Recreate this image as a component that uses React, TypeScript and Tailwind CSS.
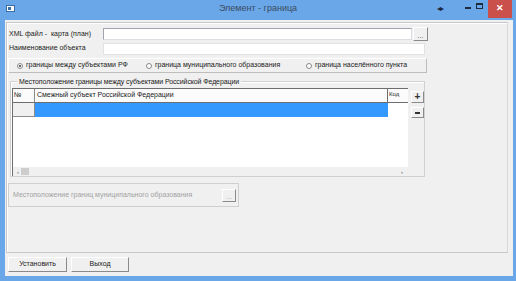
import React from "react";

const font = { fontFamily: '"Liberation Sans", Arial, sans-serif' };

function DotsButton({ className }: { className: string }) {
  return (
    <div
      className={`flex items-end justify-center bg-[#f0f0f0] border border-t-white border-l-white border-b-[#8a8a8a] border-r-[#8a8a8a] text-[7px] leading-[8px] text-[#555] ${className}`}
    >
      ...
    </div>
  );
}

function Radio({ label, checked }: { label: string; checked?: boolean }) {
  return (
    <div className="flex items-center gap-[3px]">
      <div className="w-[6px] h-[6px] rounded-full border border-[#8a8a8a] bg-white flex items-center justify-center">
        {checked && <div className="w-[2px] h-[2px] rounded-full bg-[#333]" />}
      </div>
      <span>{label}</span>
    </div>
  );
}

export default function App() {
  return (
    <div
      className="w-[516px] h-[281px] bg-[#6aa7e8] flex flex-col text-[7px] text-[#222] overflow-hidden"
      style={font}
    >
      {/* title bar */}
      <div className="h-[20px] relative flex items-center justify-center">
        <div className="absolute left-[6px] top-[5px] w-[9px] h-[7px] bg-white border border-[#3a6ea5]">
          <div className="w-[3px] h-[3px] bg-[#3a6ea5] m-[1px]" />
        </div>
        <span className="text-[9px] text-[#3b4a60] -mt-[2px]">Элемент - граница</span>
        <div className="absolute right-[4px] top-0 flex items-start">
          <span className="text-[8px] text-[#1c2a3e] mr-[20px] mt-[3px] tracking-[-1px]">◂▸</span>
          <div className="w-[9px] h-[12px] flex items-end justify-center mr-[3px]">
            <div className="w-[6px] h-[2px] bg-[#1c2a3e] mb-[3px]" />
          </div>
          <div className="w-[9px] h-[12px] flex items-center justify-center mr-[4px]">
            <div className="w-[7px] h-[6px] border border-[#1c2a3e] border-t-2" />
          </div>
          <div className="w-[24px] h-[18px] bg-[#c9504b] flex items-center justify-center text-white text-[9px] font-bold">
            ✕
          </div>
        </div>
      </div>

      {/* client */}
      <div className="flex-1 ml-[5px] mr-[3px] mb-[5px] bg-[#f0f0f0] flex flex-col">
        <div className="mt-[2px] ml-[1px] mr-[5px] h-[231px] border border-[#c8c8c8] border-r-[#d8d8d8] shadow-[inset_1px_1px_0_#fff] flex flex-col">
          {/* XML row */}
          <div className="flex items-center mt-[4px] h-[14px]">
            <span className="w-[96px] pl-[2px]">XML файл -&nbsp; карта (план)</span>
            <div className="w-[309px] h-[12px] bg-white border border-[#a0a4ac] border-b-[#dadde2] border-r-[#dadde2]" />
            <DotsButton className="w-[15px] h-[14px] ml-[1px]" />
          </div>
          {/* name row */}
          <div className="flex items-center mt-[1px] h-[13px]">
            <span className="w-[96px] pl-[2px]">Наименование объекта</span>
            <div className="w-[322px] h-[12px] bg-white border border-[#e2e2e2]" />
          </div>
          {/* radios */}
          <div className="mt-[3px] ml-[1px] w-[419px] h-[15px] border border-t-white border-l-white border-b-[#bdbdbd] border-r-[#bdbdbd] flex items-center pl-[8px]">
            <div className="w-[129px]">
              <Radio label="границы между субъектами РФ" checked />
            </div>
            <div className="w-[160px]">
              <Radio label="граница муниципального образования" />
            </div>
            <Radio label="граница населённого пункта" />
          </div>

          {/* group box */}
          <div className="relative mt-[8px] ml-[3px] w-[415px] h-[96px] border border-[#d0d0d0] shadow-[inset_1px_1px_0_#fff] flex pt-[6px] pl-[1px]">
            <span className="absolute -top-[5px] left-[6px] bg-[#f0f0f0] px-[2px] leading-[9px] tracking-[-0.1px]">
              Местоположение границы между субъектами Российской Федерации
            </span>
            {/* table */}
            <div className="w-[397px] h-[88px] bg-white border-l border-t border-[#6e6e6e] flex flex-col">
              <div className="flex h-[14px] border-b border-[#6e6e6e] bg-[#fbfbfb]">
                <div className="w-[22px] border-r border-[#8c8c8c] pl-[1px] pt-[1px]">№</div>
                <div className="w-[353px] border-r border-[#6e6e6e] pl-[2px] pt-[1px]">Смежный субъект Российской Федерации</div>
                <div className="flex-1 pl-[1px] pt-[1px] text-[6px]">Код</div>
              </div>
              <div className="flex h-[14px]">
                <div className="w-[22px] bg-[#f0f0f0] border-r border-b border-[#8c8c8c]" />
                <div className="w-[353px] bg-[#3399ff]" />
                <div className="flex-1 bg-white" />
              </div>
              <div className="flex-1" />
              <div className="h-[9px] bg-[#f0f0f0] flex items-center text-[6px] text-[#555]">
                <span className="ml-[4px] leading-[6px]">‹</span>
                <div className="ml-[2px] w-[8px] h-[7px] bg-[#cdcdcd]" />
                <div className="flex-1" />
                <span className="mr-[5px] leading-[6px]">›</span>
              </div>
            </div>
            {/* +/- buttons */}
            <div className="flex flex-col ml-[3px] mt-[3px] gap-[4px]">
              <div className="w-[13px] h-[12px] border border-t-white border-l-white border-b-[#8a8a8a] border-r-[#8a8a8a] flex items-center justify-center text-[10px] font-bold leading-[10px] text-[#333]">
                +
              </div>
              <div className="w-[13px] h-[11px] border border-t-white border-l-white border-b-[#8a8a8a] border-r-[#8a8a8a] flex items-center justify-center">
                <div className="w-[5px] h-[2px] bg-[#333]" />
              </div>
            </div>
          </div>

          {/* disabled box */}
          <div className="mt-[6px] ml-[1px] w-[231px] h-[24px] border border-[#cfcfcf] flex items-center pl-[4px] text-[#a2a2a2]">
            <span className="flex-1">Местоположение границ муниципального образования</span>
            <DotsButton className="w-[14px] h-[13px] mr-[2px] text-[#aaa]" />
          </div>
        </div>

        {/* footer buttons */}
        <div className="flex mt-[4px] ml-[3px] gap-[4px]">
          <div className="w-[59px] h-[15px] border border-t-white border-l-white border-b-[#8a8a8a] border-r-[#8a8a8a] flex items-center justify-center">
            Установить
          </div>
          <div className="w-[58px] h-[15px] border border-t-white border-l-white border-b-[#8a8a8a] border-r-[#8a8a8a] flex items-center justify-center">
            Выход
          </div>
        </div>
      </div>
    </div>
  );
}
